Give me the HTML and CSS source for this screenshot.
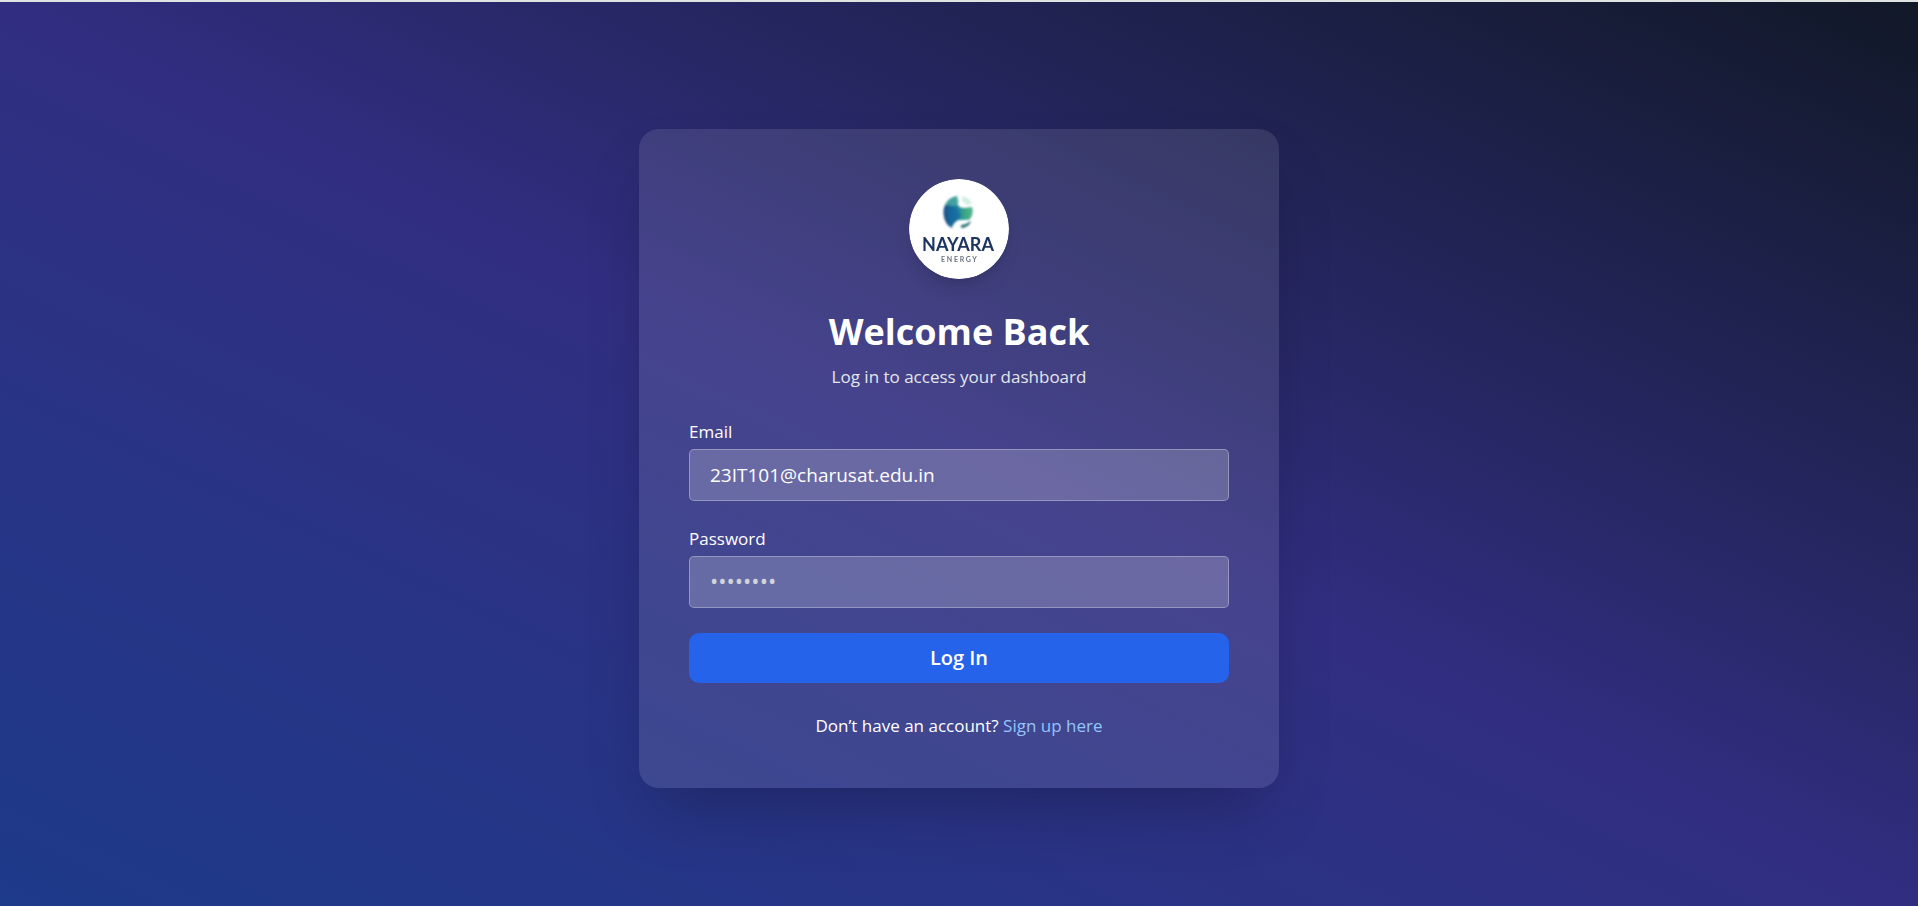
FILE: index.html
```html
<!DOCTYPE html>
<html lang="en">
<head>
<meta charset="utf-8">
<meta name="viewport" content="width=device-width, initial-scale=1">
<title>Log In</title>
<link rel="stylesheet" href="styles.css">
</head>
<body>
<main class="page">
  <section class="card">
    <header class="intro">
      <svg class="logo" viewBox="0 0 100 100" role="img" aria-label="Nayara Energy">
        <defs>
          <linearGradient id="globe" x1="0" y1="0.5" x2="1" y2="0.45">
            <stop offset="0" stop-color="#1c4a80"/>
            <stop offset="0.4" stop-color="#1b78a4"/>
            <stop offset="0.7" stop-color="#35a092"/>
            <stop offset="1" stop-color="#86cdb0"/>
          </linearGradient>
          <filter id="soft" x="-20%" y="-20%" width="140%" height="140%"><feGaussianBlur stdDeviation="1"/></filter>
          <filter id="soft-text" x="-5%" y="-10%" width="110%" height="120%"><feGaussianBlur stdDeviation="0.4"/></filter>
        </defs>
        <circle cx="50" cy="50" r="50" fill="#fff"/>
        <g filter="url(#soft)">
          <path d="M48 17 C39 19 34.500 26 34.500 33 C34.500 41 38 47 43 49 C44 44 47 41 51 41 L60 41 C63 38 64 33 63 28 L55 29 C50 29 47 26 48 17 Z" fill="url(#globe)"/>
          <path d="M48 17 C42 18 38 21 36 26 L47 27 L50 23 Z" fill="#4eae9f" opacity="0.8"/>
          <path d="M53 17 C58 18 61 20 63 25 L58 26 L53 22 Z" fill="#d3efe2"/>
          <path d="M38 27 L49 30 L52 37 L44 46 C39 43 36 36 38 27 Z" fill="#17679f" opacity="0.6"/>
          <path d="M53 30 L63 28 C65 33 63 37 61 40 L53 38 Z" fill="#35a678" opacity="0.6"/>
          <path d="M52 46 C56 46 60 43 62 42 C61 46 57 49 52 49 Z" fill="#2c6f78"/>
        </g>
        <g filter="url(#soft-text)">
          <text class="logo-name" x="49" y="72" text-anchor="middle">NAYARA</text>
          <text class="logo-sub" x="50" y="83" text-anchor="middle">E N E R G Y</text>
        </g>
      </svg>
      <h1 class="title">Welcome Back</h1>
      <p class="subtitle">Log in to access your dashboard</p>
    </header>
    <form class="form">
      <div class="field">
        <label class="label" for="email">Email</label>
        <input class="input" id="email" type="email" value="23IT101@charusat.edu.in">
      </div>
      <div class="field">
        <label class="label" for="password">Password</label>
        <input class="input" id="password" type="password" placeholder="••••••••">
      </div>
      <button class="submit" type="submit">Log In</button>
    </form>
    <p class="signup">Don’t have an account? <a class="link" href="#">Sign up here</a></p>
  </section>
</main>
</body>
</html>
```

FILE: styles.css
```css
* {
  box-sizing: border-box;
}

body {
  margin: 0;
  min-height: 100vh;
  display: flex;
  flex-direction: column;
  border-top: 2px solid #dfe3e1;
  font-family: "Segoe UI", "Open Sans", "Noto Sans", sans-serif;
  font-size: 17px;
  line-height: 25px;
  color: #fff;
}

.page {
  flex: 1;
  display: flex;
  align-items: center;
  justify-content: center;
  padding: 8px 20px 0;
  background: linear-gradient(to top right, #1e3a8a, #312e81, #111827);
}

.card {
  width: 100%;
  max-width: 640px;
  padding: 50px;
  border-radius: 20px;
  background: rgba(255, 255, 255, 0.1);
  box-shadow: 0 32px 64px -16px rgba(0, 0, 0, 0.25);
}

.intro {
  display: flex;
  flex-direction: column;
  align-items: center;
  margin-bottom: 30px;
  text-align: center;
}

.logo {
  width: 100px;
  height: 100px;
  margin-bottom: 30px;
  border-radius: 50%;
  box-shadow: 0 12px 18px -4px rgba(0, 0, 0, 0.1), 0 5px 8px -4px rgba(0, 0, 0, 0.1);
}

.logo-name {
  font: 700 18px Lato, sans-serif;
  fill: #1d3560;
}

.logo-sub {
  font: 700 7px Lato, sans-serif;
  fill: #6b7280;
}

.title {
  margin: 0 0 10px;
  font-size: 36px;
  line-height: 45px;
  font-weight: 700;
}

.subtitle {
  margin: 0;
  color: #e5e7eb;
}

.form,
.field {
  display: flex;
  flex-direction: column;
}

.form {
  gap: 25px;
}

.field {
  gap: 5px;
}

.input {
  width: 100%;
  height: 52px;
  padding: 0 20px;
  border: 1px solid rgba(255, 255, 255, 0.3);
  border-radius: 5px;
  background: rgba(255, 255, 255, 0.2);
  color: #fff;
  font-family: inherit;
  font-size: 19px;
  outline: none;
}

.input::placeholder {
  color: #d1d5db;
  font-size: 22px;
  opacity: 1;
}

.submit {
  height: 50px;
  border: 0;
  border-radius: 10px;
  background: #2563eb;
  color: #fff;
  font-family: inherit;
  font-size: 20px;
  font-weight: 600;
  cursor: pointer;
}

.signup {
  margin: 30px 0 0;
  text-align: center;
}

.link {
  color: #93c5fd;
  text-decoration: none;
}
```
